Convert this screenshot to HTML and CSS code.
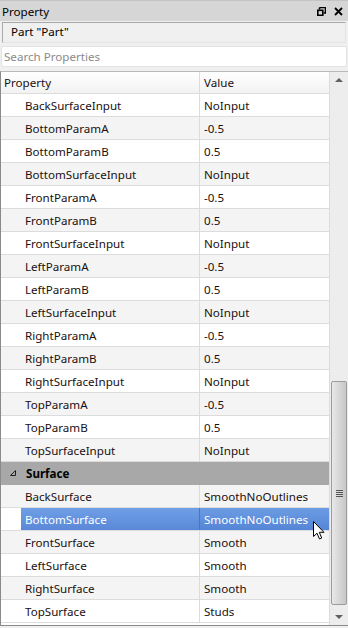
FILE: index.html
```html
<!DOCTYPE html>
<html>
<head>
    <title>Property</title>
    <link rel="stylesheet" href="styles.css">
</head>
<body>
    <div class="panel">
        <div class="titlebar">
            <span>Property</span>
            <span class="buttons">
                <svg width="9" height="9" viewBox="0 0 9 9"><path d="M2.5 0.5h6v5.5h-2M2.5 0.5v2" fill="none" stroke="#000" stroke-width="1.6"/><rect x="0.8" y="3.3" width="5" height="5" fill="none" stroke="#000" stroke-width="1.6"/></svg>
                <svg width="9" height="9" viewBox="0 0 9 9"><path d="M1 1L8 8M8 1L1 8" stroke="#000" stroke-width="1.8"/></svg>
            </span>
        </div>
        <div class="object">Part "Part"</div>
        <input class="search" type="text" placeholder="Search Properties">
        <div class="grid">
            <div class="list">
                <div class="row head"><div class="name">Property</div><div class="value">Value</div></div>
                <div class="row"><div class="name">BackSurfaceInput</div><div class="value">NoInput</div></div>
                <div class="row alt"><div class="name">BottomParamA</div><div class="value">-0.5</div></div>
                <div class="row"><div class="name">BottomParamB</div><div class="value">0.5</div></div>
                <div class="row alt"><div class="name">BottomSurfaceInput</div><div class="value">NoInput</div></div>
                <div class="row"><div class="name">FrontParamA</div><div class="value">-0.5</div></div>
                <div class="row alt"><div class="name">FrontParamB</div><div class="value">0.5</div></div>
                <div class="row"><div class="name">FrontSurfaceInput</div><div class="value">NoInput</div></div>
                <div class="row alt"><div class="name">LeftParamA</div><div class="value">-0.5</div></div>
                <div class="row"><div class="name">LeftParamB</div><div class="value">0.5</div></div>
                <div class="row alt"><div class="name">LeftSurfaceInput</div><div class="value">NoInput</div></div>
                <div class="row"><div class="name">RightParamA</div><div class="value">-0.5</div></div>
                <div class="row alt"><div class="name">RightParamB</div><div class="value">0.5</div></div>
                <div class="row"><div class="name">RightSurfaceInput</div><div class="value">NoInput</div></div>
                <div class="row alt"><div class="name">TopParamA</div><div class="value">-0.5</div></div>
                <div class="row"><div class="name">TopParamB</div><div class="value">0.5</div></div>
                <div class="row alt"><div class="name">TopSurfaceInput</div><div class="value">NoInput</div></div>
                <div class="row group">
                    <svg class="arrow" width="6" height="6" viewBox="0 0 6 6"><path d="M5.5 0.5V5.5H0.5Z" fill="none" stroke="#222" stroke-width="1"/></svg>
                    <span>Surface</span>
                </div>
                <div class="row alt"><div class="name">BackSurface</div><div class="value">SmoothNoOutlines</div></div>
                <div class="row selected"><div class="name">BottomSurface</div><div class="value">SmoothNoOutlines</div></div>
                <div class="row alt"><div class="name">FrontSurface</div><div class="value">Smooth</div></div>
                <div class="row"><div class="name">LeftSurface</div><div class="value">Smooth</div></div>
                <div class="row alt"><div class="name">RightSurface</div><div class="value">Smooth</div></div>
                <div class="row"><div class="name">TopSurface</div><div class="value">Studs</div></div>
            </div>
            <div class="scrollbar">
                <div class="btn up"></div>
                <div class="track"><div class="thumb"><div class="grip"></div></div></div>
                <div class="btn down"></div>
            </div>
        </div>
    </div>
    <svg class="cursor" width="12" height="19" viewBox="0 0 12 19"><path d="M0.5 0.5V15.5L4 12.2L6.5 18L8.7 17L6.3 11.3H11Z" fill="#fff" stroke="#000" stroke-width="1"/></svg>
</body>
</html>
```

FILE: styles.css
```css
body {
    margin: 0;
    font-family: "Noto Sans", sans-serif;
    font-size: 11.6px;
    color: #1a1010;
    background: #f0f0f0;
}
.panel {
    width: 348px;
    height: 628px;
    display: flex;
    flex-direction: column;
    background: #f0f0f0;
}
.titlebar {
    height: 21px;
    box-sizing: border-box;
    display: flex;
    align-items: center;
    justify-content: space-between;
    padding: 0 5px 0 2px;
    background: #d6d6d6;
    border-top: 1px solid #c4c4c4;
    color: #000;
}
.buttons {
    display: flex;
    gap: 8px;
    align-items: center;
}
.object {
    margin: 1px 2px 0 2px;
    height: 21px;
    box-sizing: border-box;
    border: 1px solid #a8a8a8;
    border-right-color: #e4e4e4;
    border-bottom-color: #e4e4e4;
    padding-left: 8px;
    line-height: 18px;
    background: #f0f0f0;
    color: #000;
}
.search {
    margin: 3px 1px 0 1px;
    height: 21px;
    box-sizing: border-box;
    border: 1px solid #e2e2e2;
    border-radius: 2px;
    padding: 0 2px;
    font: inherit;
    background: #fff;
}
.search::placeholder {
    color: #8a8a8a;
}
.grid {
    margin-top: 4px;
    height: 555px;
    box-sizing: border-box;
    display: flex;
    border: 1px solid #8a8a8a;
    border-right: none;
    border-top-color: #b8b8b8;
    background: #fff;
}
.list {
    flex: 1;
    display: flex;
    flex-direction: column;
}
.row {
    height: 23px;
    box-sizing: border-box;
    display: flex;
    border-bottom: 1px solid #dcdcdc;
    background: #fff;
}
.row.alt {
    background: #f4f4f4;
}
.name {
    width: 199px;
    box-sizing: border-box;
    padding-left: 24px;
    line-height: 23px;
    border-right: 1px solid #dcdcdc;
}
.value {
    flex: 1;
    padding-left: 4px;
    line-height: 23px;
}
.head {
    height: 22px;
    background: linear-gradient(#ffffff, #f2f2f2);
}
.head .name {
    padding-left: 3px;
    line-height: 21px;
}
.head .value {
    line-height: 21px;
}
.group {
    background: #a8a8a8;
    align-items: center;
    font-weight: bold;
    color: #000;
    border-bottom-color: #a8a8a8;
}
.group .arrow {
    margin: 0 10px 0 9px;
}
.selected {
    background: linear-gradient(#ffffff 0 0) left / 20px 100% no-repeat, linear-gradient(#6f9fe6, #5a88d8);
    color: #fff;
}
.selected .name {
    border-right: 1px solid #4a76c0;
}
.selected .value {
    background: linear-gradient(#6c9ce4, #5685d6);
}
.scrollbar {
    width: 18px;
    display: flex;
    flex-direction: column;
    background: #ededed;
    border-left: 1px solid #dcdcdc;
}
.btn {
    height: 18px;
    position: relative;
}
.btn::after {
    content: "";
    position: absolute;
    left: 5px;
    width: 0;
    height: 0;
    border-left: 4px solid transparent;
    border-right: 4px solid transparent;
}
.up::after {
    top: 6px;
    border-bottom: 4px solid #606060;
}
.down::after {
    top: 8px;
    border-top: 4px solid #606060;
}
.track {
    flex: 1;
    display: flex;
    flex-direction: column;
    justify-content: flex-end;
    padding: 0 1px 2px 1px;
}
.thumb {
    height: 222px;
    border: 1px solid #9c9c9c;
    border-radius: 2px;
    background: linear-gradient(to right, #e8e8e8, #d4d4d4 60%, #c8c8c8);
    display: flex;
    align-items: center;
    justify-content: center;
}
.grip {
    width: 7px;
    height: 7px;
    background: repeating-linear-gradient(#555 0 1px, transparent 1px 2px);
}
.cursor {
    position: absolute;
    left: 313px;
    top: 521px;
}
```
